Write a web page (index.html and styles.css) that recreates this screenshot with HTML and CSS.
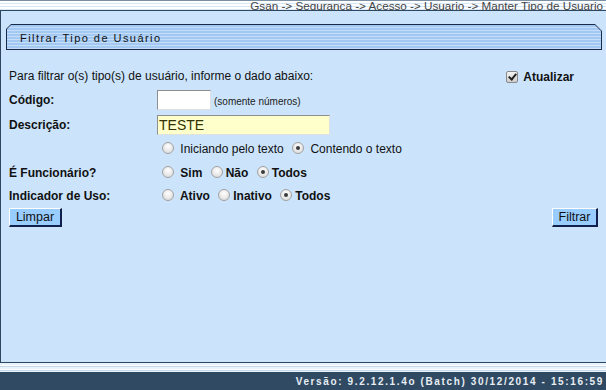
FILE: index.html
```html
<!DOCTYPE html>
<html lang="pt-BR">
<head>
<meta charset="utf-8">
<title>Filtrar Tipo de Usuário</title>
<link rel="stylesheet" href="styles.css">
</head>
<body>
<div class="page">
  <div class="topbar">
    <span class="crumbs">Gsan -&gt; Seguranca -&gt; Acesso -&gt; Usuario -&gt; Manter Tipo de Usuario</span>
  </div>
  <div class="panel">
    <div class="title-outer"><div class="title-inner">Filtrar Tipo de Usuário</div></div>
    <form class="form">
      <div class="row intro-row">
        <span class="intro">Para filtrar o(s) tipo(s) de usuário, informe o dado abaixo:</span>
        <label class="atualizar"><span class="cb checked"></span>Atualizar</label>
      </div>
      <div class="row r-code">
        <span class="lbl">Código:</span>
        <span class="field"><span class="input code"></span><span class="hint">(somente números)</span></span>
      </div>
      <div class="row r-desc">
        <span class="lbl">Descrição:</span>
        <span class="field"><span class="input desc">TESTE</span></span>
      </div>
      <div class="row r-tipo">
        <span class="lbl"></span>
        <span class="opts"><span class="rd"></span> Iniciando pelo texto <span class="rd on"></span> Contendo o texto</span>
      </div>
      <div class="row r-func">
        <span class="lbl">É Funcionário?</span>
        <span class="opts bold"><span class="rd"></span> Sim <span class="rd"></span>Não <span class="rd on"></span>Todos</span>
      </div>
      <div class="row r-uso">
        <span class="lbl">Indicador de Uso:</span>
        <span class="opts bold"><span class="rd"></span> Ativo <span class="rd"></span>Inativo <span class="rd on"></span>Todos</span>
      </div>
      <div class="buttons">
        <span class="btn btn-limpar">Limpar</span>
        <span class="btn btn-filtrar">Filtrar</span>
      </div>
    </form>
  </div>
  <div class="bottomstripes"></div>
  <div class="footer">Versão: 9.2.12.1.4o (Batch) 30/12/2014 - 15:16:59</div>
</div>
</body>
</html>
```
FILE: styles.css
```css
html, body {
  margin: 0;
  padding: 0;
  background: #cbe4fc;
}
body {
  font-family: "Liberation Sans", Arial, sans-serif;
  font-size: 12px;
  color: #111;
}
.page {
  width: 606px;
  height: 390px;
  display: flex;
  flex-direction: column;
  overflow: hidden;
}
.topbar {
  height: 10px;
  flex: none;
  display: flex;
  justify-content: flex-end;
  align-items: flex-start;
  background: repeating-linear-gradient(to bottom, #ffffff 0 2px, #d6e8f8 2px 3px);
  border-top: 1px solid #7c8ea2;
  box-sizing: border-box;
  overflow: visible;
}
.crumbs {
  font-size: 11.7px;
  line-height: 9px;
  color: #444;
  padding-right: 3px;
  white-space: nowrap;
}
.panel {
  flex: 1;
  background: #cbe4fc;
  border-top: 1px solid #2e4660;
  border-left: 1px solid #2e4660;
  border-bottom: 1px solid #2e4660;
  padding: 13px 0 0 5px;
  box-sizing: border-box;
}
.title-outer {
  width: 596px;
  height: 26px;
  background: #1b2a48;
  padding: 1px;
  box-sizing: border-box;
  clip-path: polygon(5px 0, calc(100% - 7px) 0, 100% 7px, 100% 100%, 0 100%, 0 5px);
}
.title-inner {
  height: 100%;
  background: repeating-linear-gradient(to bottom, #a3c9f2 0 2px, #c4def9 2px 3px);
  clip-path: polygon(4px 0, calc(100% - 6px) 0, 100% 6px, 100% 100%, 0 100%, 0 4px);
  font-size: 11px;
  letter-spacing: 1.45px;
  color: #111;
  padding-left: 13px;
  display: flex;
  align-items: center;
  padding-top: 1px;
  box-sizing: border-box;
}
.form {
  margin: 16px 0 0 3px;
}
.row {
  display: flex;
  align-items: center;
  height: 24px;
}
.intro-row {
  justify-content: space-between;
  height: 22px;
  padding-right: 32px;
}
.r-desc { height: 25px; }
.r-tipo { height: 24px; }
.r-func { height: 23px; }
.r-uso { height: 23px; }
.intro-row .intro { margin-top: -3px; }
.atualizar {
  font-weight: bold;
  display: flex;
  align-items: center;
  font-size: 12px;
}
.cb {
  width: 10px;
  height: 10px;
  border: 1px solid #8a8a8a;
  border-radius: 2px;
  background: linear-gradient(#f4f4f4, #cdcdcd);
  margin-right: 5px;
  position: relative;
  box-sizing: content-box;
}
.cb.checked::after {
  content: "";
  position: absolute;
  left: 3px;
  top: 0px;
  width: 3px;
  height: 6px;
  border: solid #222;
  border-width: 0 2px 2px 0;
  transform: rotate(40deg);
}
.lbl {
  width: 148px;
  flex: none;
  font-weight: bold;
}
.field {
  display: flex;
  align-items: center;
}
.opts {
  display: block;
  white-space: nowrap;
  line-height: 16px;
}
.opts.bold { font-weight: bold; }
.input {
  display: block;
  height: 20px;
  box-sizing: border-box;
  border-top: 1px solid #8e8e8e;
  border-left: 1px solid #8e8e8e;
  border-bottom: 1px solid #e0e0e0;
  border-right: 1px solid #e0e0e0;
  background: #ffffff;
}
.input.code { width: 54px; }
.input.desc {
  width: 173px;
  background: #ffffcc;
  font-size: 14px;
  line-height: 18px;
  color: #333300;
  padding-left: 1px;
}
.hint {
  font-size: 10px;
  color: #222;
  margin-left: 3px;
  margin-top: 3px;
}
.rd {
  display: inline-block;
  vertical-align: -1px;
  width: 10px;
  height: 10px;
  border: 1px solid #a2a2a2;
  border-radius: 50%;
  background: radial-gradient(circle at 50% 35%, #ffffff, #d6d6d6);
  margin: 0 3px 0 5px;
  position: relative;
}
.rd.on::after {
  content: "";
  position: absolute;
  left: 3px;
  top: 3px;
  width: 4px;
  height: 4px;
  border-radius: 50%;
  background: #3a3a3a;
}
.buttons {
  display: flex;
  justify-content: space-between;
  margin-top: 1px;
  padding-right: 8px;
}
.btn {
  display: block;
  box-sizing: border-box;
  height: 19px;
  background: #99ccff;
  border-top: 1px solid #ffffff;
  border-left: 1px solid #ffffff;
  border-right: 2px solid #10204a;
  border-bottom: 2px solid #10204a;
  font-size: 12.5px;
  line-height: 16px;
  text-align: center;
  color: #111;
}
.btn-limpar { width: 53px; }
.btn-filtrar { width: 46px; }
.bottomstripes {
  height: 9px;
  flex: none;
  background: repeating-linear-gradient(to bottom, #e9f3fc 0 2px, #ffffff 2px 3px, #c5d8ea 3px 4px);
}
.footer {
  height: 18px;
  flex: none;
  background: #2f4a62;
  color: #e8eef4;
  font-weight: bold;
  font-size: 10px;
  letter-spacing: 1.63px;
  text-align: right;
  padding-right: 2px;
  line-height: 19px;
}
```
